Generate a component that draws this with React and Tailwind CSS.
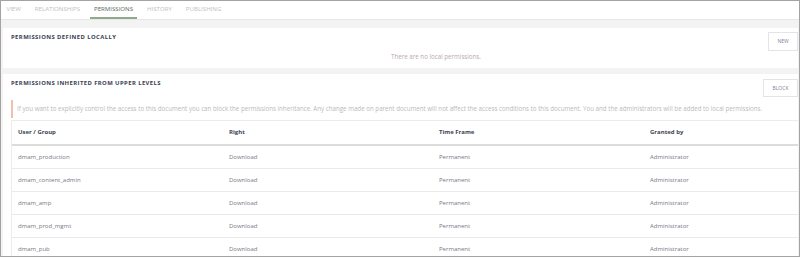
import React from 'react';

const tabs = ['View', 'Relationships', 'Permissions', 'History', 'Publishing'];

const rows = [
  { user: 'dmam_production', right: 'Download', time: 'Permanent', by: 'Administrator' },
  { user: 'dmam_content_admin', right: 'Download', time: 'Permanent', by: 'Administrator' },
  { user: 'dmam_amp', right: 'Download', time: 'Permanent', by: 'Administrator' },
  { user: 'dmam_prod_mgmt', right: 'Download', time: 'Permanent', by: 'Administrator' },
  { user: 'dmam_pub', right: 'Download', time: 'Permanent', by: 'Administrator' },
];

function PanelTitle({ children }) {
  return (
    <h2 className="text-[5.9px] font-bold uppercase tracking-[0.07em] text-[#3a4052] leading-none">
      {children}
    </h2>
  );
}

function SmallButton({ children, className = '' }) {
  return (
    <button
      className={`border border-[#e4e4e4] bg-white text-[5px] uppercase text-[#7d7f95] leading-none flex items-center justify-center ${className}`}
    >
      {children}
    </button>
  );
}

export default function App() {
  return (
    <div className="w-[800px] h-[257px] overflow-hidden border border-[#a3a3a3] bg-[#f3f3f3] font-['Open_Sans',sans-serif]">
      {/* tab bar */}
      <nav className="h-[19px] bg-white border-b border-[#e8e8e8] flex pl-[2px] gap-[7px]">
        {tabs.map((t) => {
          const active = t === 'Permissions';
          return (
            <div
              key={t}
              className={`px-[3.5px] flex items-center text-[6.1px] uppercase border-b-2 ${
                active ? 'border-[#8fa98f] text-[#56665a]' : 'border-transparent text-[#c0c0c0]'
              }`}
            >
              {t}
            </div>
          );
        })}
      </nav>

      {/* local permissions */}
      <section className="mt-[8px] ml-[2px] mr-[1px] h-[40px] bg-white flex">
        <div className="flex-1 pl-[8px] pt-[7px]">
          <PanelTitle>Permissions defined locally</PanelTitle>
          <p className="mt-[13px] pl-[380px] text-[6.2px] text-[#b6a9b1] leading-none">
            There are no local permissions.
          </p>
        </div>
        <SmallButton className="mt-[4px] w-[30px] h-[19px]">New</SmallButton>
      </section>

      {/* inherited permissions */}
      <section className="mt-[6px] ml-[2px] mr-[1px] bg-white">
        <div className="flex">
          <div className="flex-1 pl-[8px] pt-[7px]">
            <PanelTitle>Permissions inherited from upper levels</PanelTitle>
          </div>
          <SmallButton className="mt-[5px] w-[35px] h-[18px]">Block</SmallButton>
        </div>

        <div className="ml-[8px] mt-[3px] h-[18px] border-l-2 border-[#f3bfa8] pl-[4px] flex items-center text-[6.2px] text-[#bababa] whitespace-nowrap">
          If you want to explicitly control the access to this document you can block the permissions inheritance. Any change made on parent document will not affect the access conditions to this document. You and the administrators will be added to local permissions.
        </div>

        <div className="ml-[8px] mt-[2px] border-l border-t border-[#ececec]">
          <div className="grid grid-cols-[211px_210px_211px_1fr] h-[25px] border-b-2 border-[#dcdcdc] text-[6px] font-bold text-[#3d4454] items-center">
            <div className="pl-[6px]">User / Group</div>
            <div className="pl-[6px]">Right</div>
            <div className="pl-[6px]">Time Frame</div>
            <div className="pl-[6px]">Granted by</div>
          </div>
          {rows.map((r) => (
            <div
              key={r.user}
              className="grid grid-cols-[211px_210px_211px_1fr] h-[23px] border-b border-[#eaeaea] text-[6px] text-[#767984] items-center"
            >
              <div className="pl-[6px]">{r.user}</div>
              <div className="pl-[6px]">{r.right}</div>
              <div className="pl-[6px]">{r.time}</div>
              <div className="pl-[6px]">{r.by}</div>
            </div>
          ))}
        </div>
      </section>
    </div>
  );
}
